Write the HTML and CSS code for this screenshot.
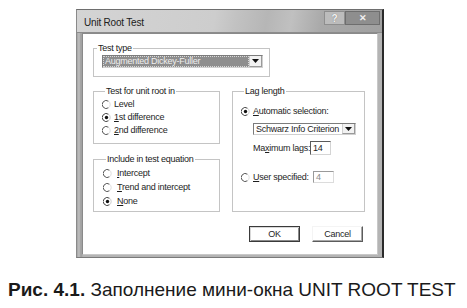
FILE: index.html
```html
<!DOCTYPE html>
<html>
<head>
<meta charset="utf-8">
<link rel="stylesheet" href="styles.css">
</head>
<body>
<div class="page">
  <div class="dialog">
    <div class="titlebar">
      <span class="title">Unit Root Test</span>
      <div class="tb-buttons">
        <span class="tb-help">?</span>
        <span class="tb-close">✕</span>
      </div>
    </div>
    <div class="frame">
      <div class="client">
        <div class="group g-type">
          <span class="legend">Test type</span>
          <div class="combo combo-sel">
            <span class="combo-text">Augmented Dickey-Fuller</span>
            <span class="drop"><svg width="7" height="4" viewBox="0 0 7 4"><path d="M0 0h7L3.5 4z" fill="#111"/></svg></span>
          </div>
        </div>
        <div class="cols">
          <div class="col-left">
            <div class="group g-unit">
              <span class="legend">Test for unit root in</span>
              <div class="radio-row"><svg class="radio" viewBox="0 0 9 9"><path d="M6.6 1.3A4 4 0 1 0 6.6 7.7" fill="none" stroke="#555" stroke-width="1"/><path d="M6.6 1.3A4 4 0 0 1 6.6 7.7" fill="none" stroke="#ddd" stroke-width="1"/></svg><span>Level</span></div>
              <div class="radio-row"><svg class="radio" viewBox="0 0 9 9"><path d="M6.6 1.3A4 4 0 1 0 6.6 7.7" fill="none" stroke="#444" stroke-width="1"/><path d="M6.6 1.3A4 4 0 0 1 6.6 7.7" fill="none" stroke="#ccc" stroke-width="1"/><circle cx="4.5" cy="4.5" r="1.7" fill="#111"/></svg><span><u>1</u>st difference</span></div>
              <div class="radio-row"><svg class="radio" viewBox="0 0 9 9"><path d="M6.6 1.3A4 4 0 1 0 6.6 7.7" fill="none" stroke="#555" stroke-width="1"/><path d="M6.6 1.3A4 4 0 0 1 6.6 7.7" fill="none" stroke="#ddd" stroke-width="1"/></svg><span><u>2</u>nd difference</span></div>
            </div>
            <div class="group g-incl">
              <span class="legend">Include in test equation</span>
              <div class="radio-row"><svg class="radio" viewBox="0 0 9 9"><path d="M6.6 1.3A4 4 0 1 0 6.6 7.7" fill="none" stroke="#555" stroke-width="1"/><path d="M6.6 1.3A4 4 0 0 1 6.6 7.7" fill="none" stroke="#ddd" stroke-width="1"/></svg><span><u>I</u>ntercept</span></div>
              <div class="radio-row"><svg class="radio" viewBox="0 0 9 9"><path d="M6.6 1.3A4 4 0 1 0 6.6 7.7" fill="none" stroke="#555" stroke-width="1"/><path d="M6.6 1.3A4 4 0 0 1 6.6 7.7" fill="none" stroke="#ddd" stroke-width="1"/></svg><span><u>T</u>rend and intercept</span></div>
              <div class="radio-row"><svg class="radio" viewBox="0 0 9 9"><path d="M6.6 1.3A4 4 0 1 0 6.6 7.7" fill="none" stroke="#444" stroke-width="1"/><path d="M6.6 1.3A4 4 0 0 1 6.6 7.7" fill="none" stroke="#ccc" stroke-width="1"/><circle cx="4.5" cy="4.5" r="1.7" fill="#111"/></svg><span><u>N</u>one</span></div>
            </div>
          </div>
          <div class="group g-lag">
            <span class="legend">Lag length</span>
            <div class="radio-row lag-auto"><svg class="radio" viewBox="0 0 9 9"><path d="M6.6 1.3A4 4 0 1 0 6.6 7.7" fill="none" stroke="#444" stroke-width="1"/><path d="M6.6 1.3A4 4 0 0 1 6.6 7.7" fill="none" stroke="#ccc" stroke-width="1"/><circle cx="4.5" cy="4.5" r="1.7" fill="#111"/></svg><span><u>A</u>utomatic selection:</span></div>
            <div class="combo combo-crit">
              <span class="combo-text">Schwarz Info Criterion</span>
              <span class="drop"><svg width="7" height="4" viewBox="0 0 7 4"><path d="M0 0h7L3.5 4z" fill="#111"/></svg></span>
            </div>
            <div class="field-row">
              <span class="field-label">Ma<u>x</u>imum lags:</span>
              <span class="input">14</span>
            </div>
            <div class="radio-row lag-user">
              <svg class="radio" viewBox="0 0 9 9"><path d="M6.6 1.3A4 4 0 1 0 6.6 7.7" fill="none" stroke="#555" stroke-width="1"/><path d="M6.6 1.3A4 4 0 0 1 6.6 7.7" fill="none" stroke="#ddd" stroke-width="1"/></svg>
              <span class="field-label user-label"><u>U</u>ser specified:</span>
              <span class="input input-dis">4</span>
            </div>
          </div>
        </div>
        <div class="buttons">
          <span class="btn btn-default">OK</span>
          <span class="btn">Cancel</span>
        </div>
      </div>
    </div>
  </div>
  <p class="caption"><b>Рис. 4.1.</b> Заполнение мини-окна UNIT ROOT TEST</p>
</div>
</body>
</html>
```

FILE: styles.css
```css
html, body {
  margin: 0;
  padding: 0;
  background: #ffffff;
}

.page {
  width: 467px;
  height: 308px;
  overflow: hidden;
  padding-top: 9px;
  box-sizing: border-box;
  font-family: "Liberation Sans", Arial, sans-serif;
}

.dialog {
  margin-left: 76px;
  width: 308px;
  height: 249px;
  box-sizing: border-box;
  display: flex;
  flex-direction: column;
  border-top: 1px solid #6e6e6e;
  border-left: 1px solid #8a8a8a;
  border-right: 2px solid #2a2a2a;
  border-bottom: 1px solid #7a7a7a;
  background: #b0b0b0;
  color: #1e1e1e;
}

.titlebar {
  height: 22px;
  display: flex;
  align-items: center;
  justify-content: space-between;
  padding-left: 7px;
  padding-right: 2px;
  background: linear-gradient(100deg, #d4d4d4 0%, #cdcdcd 45%, #c2c2c2 52%, #b6b6b6 62%, #c0c0c0 70%, #a9a9a9 80%, #a0a0a0 100%);
  border-bottom: 1px solid #8c8c8c;
}

.title {
  font-size: 10px;
  letter-spacing: -0.2px;
  color: #202020;
  margin-top: 2px;
}

.tb-buttons {
  display: flex;
  align-self: flex-start;
  margin-top: 1px;
}

.tb-help, .tb-close {
  height: 14px;
  display: flex;
  align-items: center;
  justify-content: center;
  font-size: 10px;
  font-weight: bold;
  box-sizing: border-box;
}

.tb-help {
  width: 21px;
  background: #bcbcbc;
  border: 1px solid #8e8e8e;
  color: #f4f4f4;
  text-shadow: 0 0 1px #666;
}

.tb-close {
  width: 35px;
  background: #8e8e8e;
  border: 1px solid #6e6e6e;
  color: #f0f0f0;
  font-size: 9px;
}

.frame {
  flex: 1;
  padding: 0 4px 2px 5px;
  display: flex;
  background: linear-gradient(90deg, #a4a4a4 0, #c0c0c0 2px, #9c9c9c 4px, #b4b4b4 6px);
}

.client {
  flex: 1;
  background: #ffffff;
  border: 1px solid #8a8a8a;
  border-right-color: #c8c8c8;
  border-bottom-color: #c8c8c8;
  font-size: 9px;
  letter-spacing: -0.25px;
  line-height: 11px;
}

.group {
  border: 1px solid #c4c4c4;
  box-sizing: border-box;
  display: flex;
  flex-direction: column;
}

.legend {
  align-self: flex-start;
  margin: -6px 0 0 3px;
  padding: 0 1px;
  background: #ffffff;
  height: 11px;
  line-height: 11px;
  color: #1a1a1a;
}

.g-type {
  margin: 14px 0 0 10px;
  width: 177px;
  height: 29px;
}

.combo {
  display: flex;
  align-items: stretch;
  box-sizing: border-box;
  border: 1px solid #7c7c7c;
  border-right-color: #d0d0d0;
  border-bottom-color: #d0d0d0;
}

.combo-text {
  white-space: nowrap;
  overflow: hidden;
}

.combo-sel {
  margin: 1px 0 0 8px;
  width: 161px;
  height: 13px;
  background: #ffffff;
}

.combo-sel .combo-text {
  flex: 1;
  background: #8e8e8e;
  color: #eeeeee;
  padding-left: 2px;
  outline: 1px dotted #d8d8d8;
  outline-offset: -1px;
  line-height: 11px;
}

.drop {
  width: 11px;
  flex: none;
  display: flex;
  align-items: center;
  justify-content: center;
  background: #f2f2f2;
  border-left: 1px solid #d0d0d0;
  border-right: 1px solid #9a9a9a;
  border-bottom: 1px solid #9a9a9a;
}

.cols {
  display: flex;
  gap: 12px;
  margin: 14px 0 0 10px;
}

.col-left {
  width: 127px;
  display: flex;
  flex-direction: column;
  gap: 15px;
}

.g-unit {
  height: 53px;
  padding-left: 8px;
}

.g-unit .radio-row {
  height: 13px;
}

.g-unit .radio-row:first-of-type {
  margin-top: 1px;
}

.g-incl {
  height: 53px;
  padding-left: 9px;
}

.g-incl .radio-row {
  height: 14px;
  gap: 5px;
}

.g-incl .radio-row:first-of-type {
  margin-top: 1px;
}

.radio-row {
  display: flex;
  align-items: center;
  gap: 3px;
  white-space: nowrap;
}

.radio {
  width: 9px;
  height: 9px;
  flex: none;
}

.g-lag {
  width: 133px;
  height: 121px;
  padding-left: 8px;
}

.lag-auto {
  height: 13px;
  margin-top: 8px;
}

.combo-crit {
  margin: 5px 0 0 12px;
  width: 103px;
  height: 12px;
  background: #ffffff;
}

.combo-crit .combo-text {
  flex: 1;
  padding-left: 2px;
  line-height: 10px;
  color: #1e1e1e;
}

.field-row {
  display: flex;
  align-items: center;
  margin: 6px 0 0 12px;
  height: 14px;
}

.field-label {
  width: 57px;
  flex: none;
  white-space: nowrap;
}

.input {
  width: 21px;
  height: 14px;
  flex: none;
  box-sizing: border-box;
  border: 1px solid #5a5a5a;
  border-right-color: #d4d4d4;
  border-bottom-color: #d4d4d4;
  padding-left: 2px;
  line-height: 12px;
  background: #ffffff;
}

.input-dis {
  height: 12px;
  line-height: 10px;
  color: #8a8a8a;
  border-color: #9a9a9a #dcdcdc #dcdcdc #9a9a9a;
}

.lag-user {
  margin-top: 16px;
  height: 12px;
}

.user-label {
  width: 57px;
  margin-left: 0;
}

.buttons {
  display: flex;
  justify-content: flex-end;
  gap: 12px;
  margin-top: 14px;
  padding-right: 14px;
}

.btn {
  width: 51px;
  height: 16px;
  box-sizing: border-box;
  display: flex;
  align-items: center;
  justify-content: center;
  border: 1px solid #f4f4f4;
  border-right-color: #5c5c5c;
  border-bottom-color: #5c5c5c;
  box-shadow: inset -1px -1px 0 #a8a8a8;
  background: #ffffff;
}

.btn-default {
  border: 1px solid #3a3a3a;
  box-shadow: inset 1px 1px 0 #d8d8d8, inset -1px -1px 0 #8a8a8a;
}

.caption {
  margin: 22px 0 0 8px;
  font-size: 19px;
  line-height: 20px;
  color: #1a1a1a;
  white-space: nowrap;
}
```
